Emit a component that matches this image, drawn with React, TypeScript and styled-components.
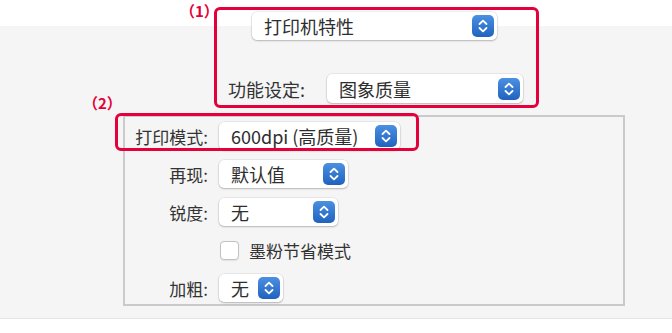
import React from "react";
import styled, { createGlobalStyle } from "styled-components";

const Global = createGlobalStyle`
  html, body { margin: 0; padding: 0; background: #fff; }
  body { font-family: "Noto Sans CJK SC", "Noto Sans", sans-serif; }
`;

const Page = styled.div`
  position: relative;
  width: 672px;
  height: 333px;
  overflow: hidden;
  box-sizing: border-box;
  padding-top: 12px;
  display: flex;
  flex-direction: column;
  background: linear-gradient(
    to bottom,
    #fff 0,
    #fff 26px,
    #f5f5f5 26px,
    #f5f5f5 318px,
    #e4e4e4 318px,
    #e4e4e4 319px,
    #fff 319px
  );
`;

const Popup = styled.div<{ $w: number; $h?: number; $size?: number }>`
  width: ${(p) => p.$w}px;
  height: ${(p) => p.$h ?? 28}px;
  box-sizing: border-box;
  background: #fff;
  border-radius: 5px;
  box-shadow: 0 0 0 0.5px rgba(0, 0, 0, 0.1), 0 1px 2px rgba(0, 0, 0, 0.22);
  display: flex;
  align-items: center;
  justify-content: space-between;
  padding: 0 3px 0 12px;
  font-size: ${(p) => p.$size ?? 18}px;
  color: #2e2e2e;
  white-space: nowrap;
`;

const Stepper = styled.div`
  width: 22px;
  height: 22px;
  border-radius: 5px;
  background: linear-gradient(to bottom, #4b90e2, #1f63bf);
  display: flex;
  align-items: center;
  justify-content: center;
  flex: none;
`;

const TopPopup = styled(Popup)`
  margin-left: 252px;
`;

const FeatureRow = styled.div`
  margin-top: 34px;
  padding-left: 228px;
  display: flex;
  align-items: center;
`;

const FeatureLabel = styled.span`
  width: 99px;
  font-size: 18px;
  color: #333;
`;

const Group = styled.div`
  margin: 12px 0 0 123px;
  width: 502px;
  height: 191px;
  box-sizing: border-box;
  border: 2px solid #cacaca;
  padding-top: 5px;
  display: grid;
  grid-template-columns: 83px auto;
  grid-auto-rows: 28px;
  column-gap: 11px;
  row-gap: 10px;
  align-content: start;
  justify-content: start;
`;

const Label = styled.span`
  align-self: center;
  text-align: right;
  font-size: 17px;
  color: #333;
  white-space: nowrap;
`;

const CheckRow = styled.label`
  grid-column: 2;
  display: flex;
  align-items: center;
  gap: 10px;
  padding-left: 1px;
  font-size: 17px;
  color: #333;
`;

const Box = styled.span`
  width: 19px;
  height: 19px;
  box-sizing: border-box;
  border-radius: 4px;
  background: #fff;
  border: 1px solid #c2c2c2;
  box-shadow: 0 0.5px 1px rgba(0, 0, 0, 0.08);
`;

const RedBox = styled.div<{ $x: number; $y: number; $w: number; $h: number }>`
  position: absolute;
  left: ${(p) => p.$x}px;
  top: ${(p) => p.$y}px;
  width: ${(p) => p.$w}px;
  height: ${(p) => p.$h}px;
  box-sizing: border-box;
  border: 3px solid #e4003a;
  border-radius: 6px;
  pointer-events: none;
`;

const Tag = styled.span<{ $x: number; $y: number }>`
  position: absolute;
  left: ${(p) => p.$x}px;
  top: ${(p) => p.$y}px;
  font-size: 15px;
  font-weight: 700;
  line-height: 16px;
  color: #e4003a;
`;

const Chevrons = () => (
  <svg width="22" height="22" viewBox="0 0 22 22" fill="none">
    <path d="M7.5 9 L11 5.6 L14.5 9" stroke="#fff" strokeWidth="1.8" strokeLinecap="round" strokeLinejoin="round" />
    <path d="M7.5 13 L11 16.4 L14.5 13" stroke="#fff" strokeWidth="1.8" strokeLinecap="round" strokeLinejoin="round" />
  </svg>
);

const Select = ({ text, w, h, size, as }: { text: string; w: number; h?: number; size?: number; as?: any }) => {
  const C = as ?? Popup;
  return (
    <C $w={w} $h={h} $size={size}>
      <span>{text}</span>
      <Stepper>
        <Chevrons />
      </Stepper>
    </C>
  );
};

export default function App() {
  return (
    <>
      <Global />
      <Page>
        <Select as={TopPopup} text="打印机特性" w={245} />
        <FeatureRow>
          <FeatureLabel>功能设定:</FeatureLabel>
          <Select text="图象质量" w={196} h={29} />
        </FeatureRow>
        <Group>
          <Label>打印模式:</Label>
          <Select text="600dpi (高质量)" w={181} />
          <Label>再现:</Label>
          <Select text="默认值" w={129} />
          <Label>锐度:</Label>
          <Select text="无" w={119} />
          <CheckRow>
            <Box />
            <span>墨粉节省模式</span>
          </CheckRow>
          <Label>加粗:</Label>
          <Select text="无" w={64} />
        </Group>

        <RedBox $x={214} $y={7} $w={325} $h={101} />
        <RedBox $x={115} $y={113} $w={304} $h={38} />
        <Tag $x={180} $y={3}>（1）</Tag>
        <Tag $x={83} $y={95}>（2）</Tag>
      </Page>
    </>
  );
}
